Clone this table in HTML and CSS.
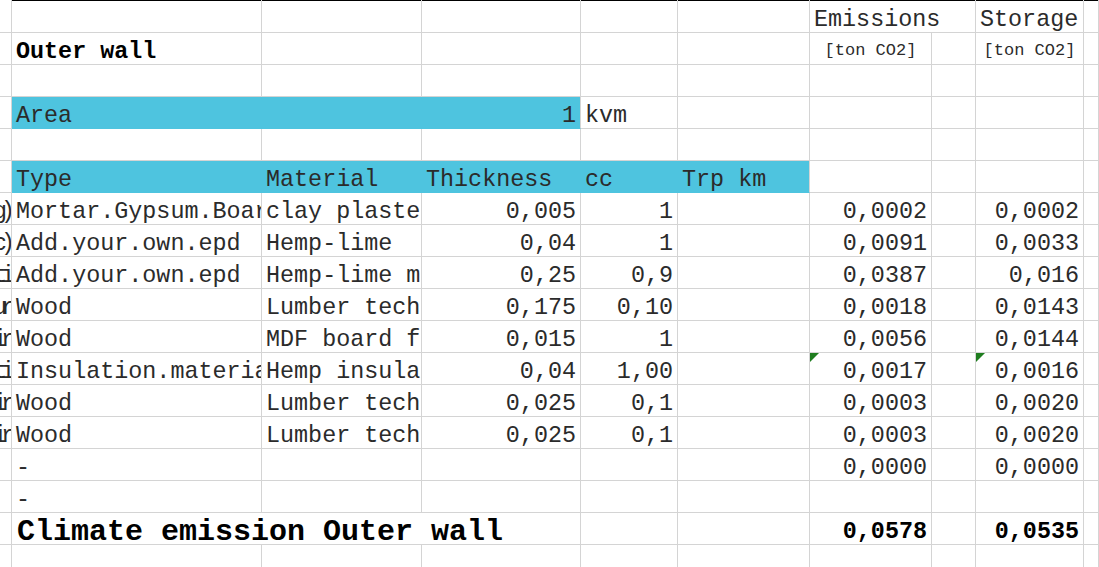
FILE: index.html
```html
<!DOCTYPE html>
<html>
<head>
<meta charset="utf-8">
<link rel="stylesheet" href="styles.css">
</head>
<body>
<div class="sheet">
  <!-- row 1 -->
  <div class="c top"></div><div class="c top"></div><div class="c top"></div><div class="c top"></div><div class="c top"></div><div class="c top"></div>
  <div class="c top span2">Emissions</div><div class="c top">Storage</div><div class="c top"></div>
  <!-- row 2 -->
  <div class="c"></div><div class="c b">Outer wall</div><div class="c"></div><div class="c"></div><div class="c"></div><div class="c"></div>
  <div class="c unit">[ton CO2]</div><div class="c"></div><div class="c unit">[ton CO2]</div><div class="c"></div>
  <!-- row 3 -->
  <div class="c"></div><div class="c"></div><div class="c"></div><div class="c"></div><div class="c"></div><div class="c"></div><div class="c"></div><div class="c"></div><div class="c"></div><div class="c"></div>
  <!-- row 4 -->
  <div class="c"></div><div class="c blue edge span3 split"><span>Area</span><span>1</span></div><div class="c">kvm</div><div class="c"></div><div class="c"></div><div class="c"></div><div class="c"></div><div class="c"></div>
  <!-- row 5 -->
  <div class="c"></div><div class="c"></div><div class="c"></div><div class="c"></div><div class="c"></div><div class="c"></div><div class="c"></div><div class="c"></div><div class="c"></div><div class="c"></div>
  <!-- row 6 -->
  <div class="c"></div><div class="c blue">Type</div><div class="c blue">Material</div><div class="c blue">Thickness</div><div class="c blue">cc</div><div class="c blue edge">Trp km</div><div class="c"></div><div class="c"></div><div class="c"></div><div class="c"></div>
  <!-- row 7 -->
  <div class="c r clip"><span>g)</span></div><div class="c">Mortar.Gypsum.Board</div><div class="c">clay plaster</div><div class="c r">0,005</div><div class="c r">1</div><div class="c"></div><div class="c r">0,0002</div><div class="c"></div><div class="c r">0,0002</div><div class="c"></div>
  <!-- row 8 -->
  <div class="c r clip"><span>c)</span></div><div class="c">Add.your.own.epd</div><div class="c">Hemp-lime</div><div class="c r">0,04</div><div class="c r">1</div><div class="c"></div><div class="c r">0,0091</div><div class="c"></div><div class="c r">0,0033</div><div class="c"></div>
  <!-- row 9 -->
  <div class="c r clip"><span>ti</span></div><div class="c">Add.your.own.epd</div><div class="c">Hemp-lime mortar</div><div class="c r">0,25</div><div class="c r">0,9</div><div class="c"></div><div class="c r">0,0387</div><div class="c"></div><div class="c r">0,016</div><div class="c"></div>
  <!-- row 10 -->
  <div class="c r clip"><span>ur</span></div><div class="c">Wood</div><div class="c">Lumber technical</div><div class="c r">0,175</div><div class="c r">0,10</div><div class="c"></div><div class="c r">0,0018</div><div class="c"></div><div class="c r">0,0143</div><div class="c"></div>
  <!-- row 11 -->
  <div class="c r clip"><span>ir</span></div><div class="c">Wood</div><div class="c">MDF board fiber</div><div class="c r">0,015</div><div class="c r">1</div><div class="c"></div><div class="c r">0,0056</div><div class="c"></div><div class="c r">0,0144</div><div class="c"></div>
  <!-- row 12 -->
  <div class="c r clip"><span>ti</span></div><div class="c">Insulation.material</div><div class="c">Hemp insulation</div><div class="c r">0,04</div><div class="c r">1,00</div><div class="c"></div><div class="c r note"><span class="flag"></span>0,0017</div><div class="c"></div><div class="c r note"><span class="flag"></span>0,0016</div><div class="c"></div>
  <!-- row 13 -->
  <div class="c r clip"><span>ir</span></div><div class="c">Wood</div><div class="c">Lumber technical</div><div class="c r">0,025</div><div class="c r">0,1</div><div class="c"></div><div class="c r">0,0003</div><div class="c"></div><div class="c r">0,0020</div><div class="c"></div>
  <!-- row 14 -->
  <div class="c r clip"><span>ir</span></div><div class="c">Wood</div><div class="c">Lumber technical</div><div class="c r">0,025</div><div class="c r">0,1</div><div class="c"></div><div class="c r">0,0003</div><div class="c"></div><div class="c r">0,0020</div><div class="c"></div>
  <!-- row 15 -->
  <div class="c"></div><div class="c">-</div><div class="c"></div><div class="c"></div><div class="c"></div><div class="c"></div><div class="c r">0,0000</div><div class="c"></div><div class="c r">0,0000</div><div class="c"></div>
  <!-- row 16 -->
  <div class="c"></div><div class="c">-</div><div class="c"></div><div class="c"></div><div class="c"></div><div class="c"></div><div class="c"></div><div class="c"></div><div class="c"></div><div class="c"></div>
  <!-- row 17 -->
  <div class="c"></div><div class="c span3 total">Climate emission Outer wall</div><div class="c"></div><div class="c"></div><div class="c r b">0,0578</div><div class="c"></div><div class="c r b">0,0535</div><div class="c"></div>
  <!-- row 18 -->
  <div class="c"></div><div class="c"></div><div class="c"></div><div class="c"></div><div class="c"></div><div class="c"></div><div class="c"></div><div class="c"></div><div class="c"></div><div class="c"></div>
</div>
</body>
</html>
```

FILE: styles.css
```css
html, body {
  margin: 0;
  padding: 0;
  background: #ffffff;
  overflow: hidden;
}

.sheet {
  display: grid;
  grid-template-columns: 12px 250px 160px 159px 97px 132px 122px 44px 108px 15px;
  grid-template-rows: 33px repeat(17, 32px);
  width: 1099px;
}

.c {
  box-sizing: border-box;
  border-right: 1px solid #d4d4d4;
  border-bottom: 1px solid #d4d4d4;
  overflow: hidden;
  white-space: nowrap;
  display: flex;
  align-items: flex-end;
  padding: 0 4px 0 4px;
  font-family: "Liberation Mono", "Courier New", monospace;
  font-size: 23.4px;
  line-height: 24px;
  color: #2b2b2b;
}

.top {
  box-shadow: inset 0 1px 0 #000000;
}
.top:first-child {
  box-shadow: none;
}

.r {
  justify-content: flex-end;
}

.clip {
  padding: 0;
}
.clip span {
  letter-spacing: -6px;
  margin-right: 2px;
}

.span2 {
  grid-column: span 2;
}
.span3 {
  grid-column: span 3;
}

.b {
  font-weight: bold;
  color: #000000;
}

.unit {
  font-size: 17px;
  line-height: 20px;
  justify-content: center;
  align-items: center;
  padding-top: 4px;
}

.blue {
  background: #4ec4df;
  border-right-color: #4ec4df;
  border-bottom-color: #4ec4df;
}
.blue.edge {
  border-right-color: #d4d4d4;
}

.split {
  justify-content: space-between;
}

.note {
  position: relative;
}
.flag {
  position: absolute;
  left: 0;
  top: 0;
  width: 0;
  height: 0;
  border-top: 9px solid #1f7d1f;
  border-right: 9px solid transparent;
}

.total {
  font-weight: bold;
  font-size: 30px;
  line-height: 24px;
  color: #000000;
  padding-left: 5px;
}
```
